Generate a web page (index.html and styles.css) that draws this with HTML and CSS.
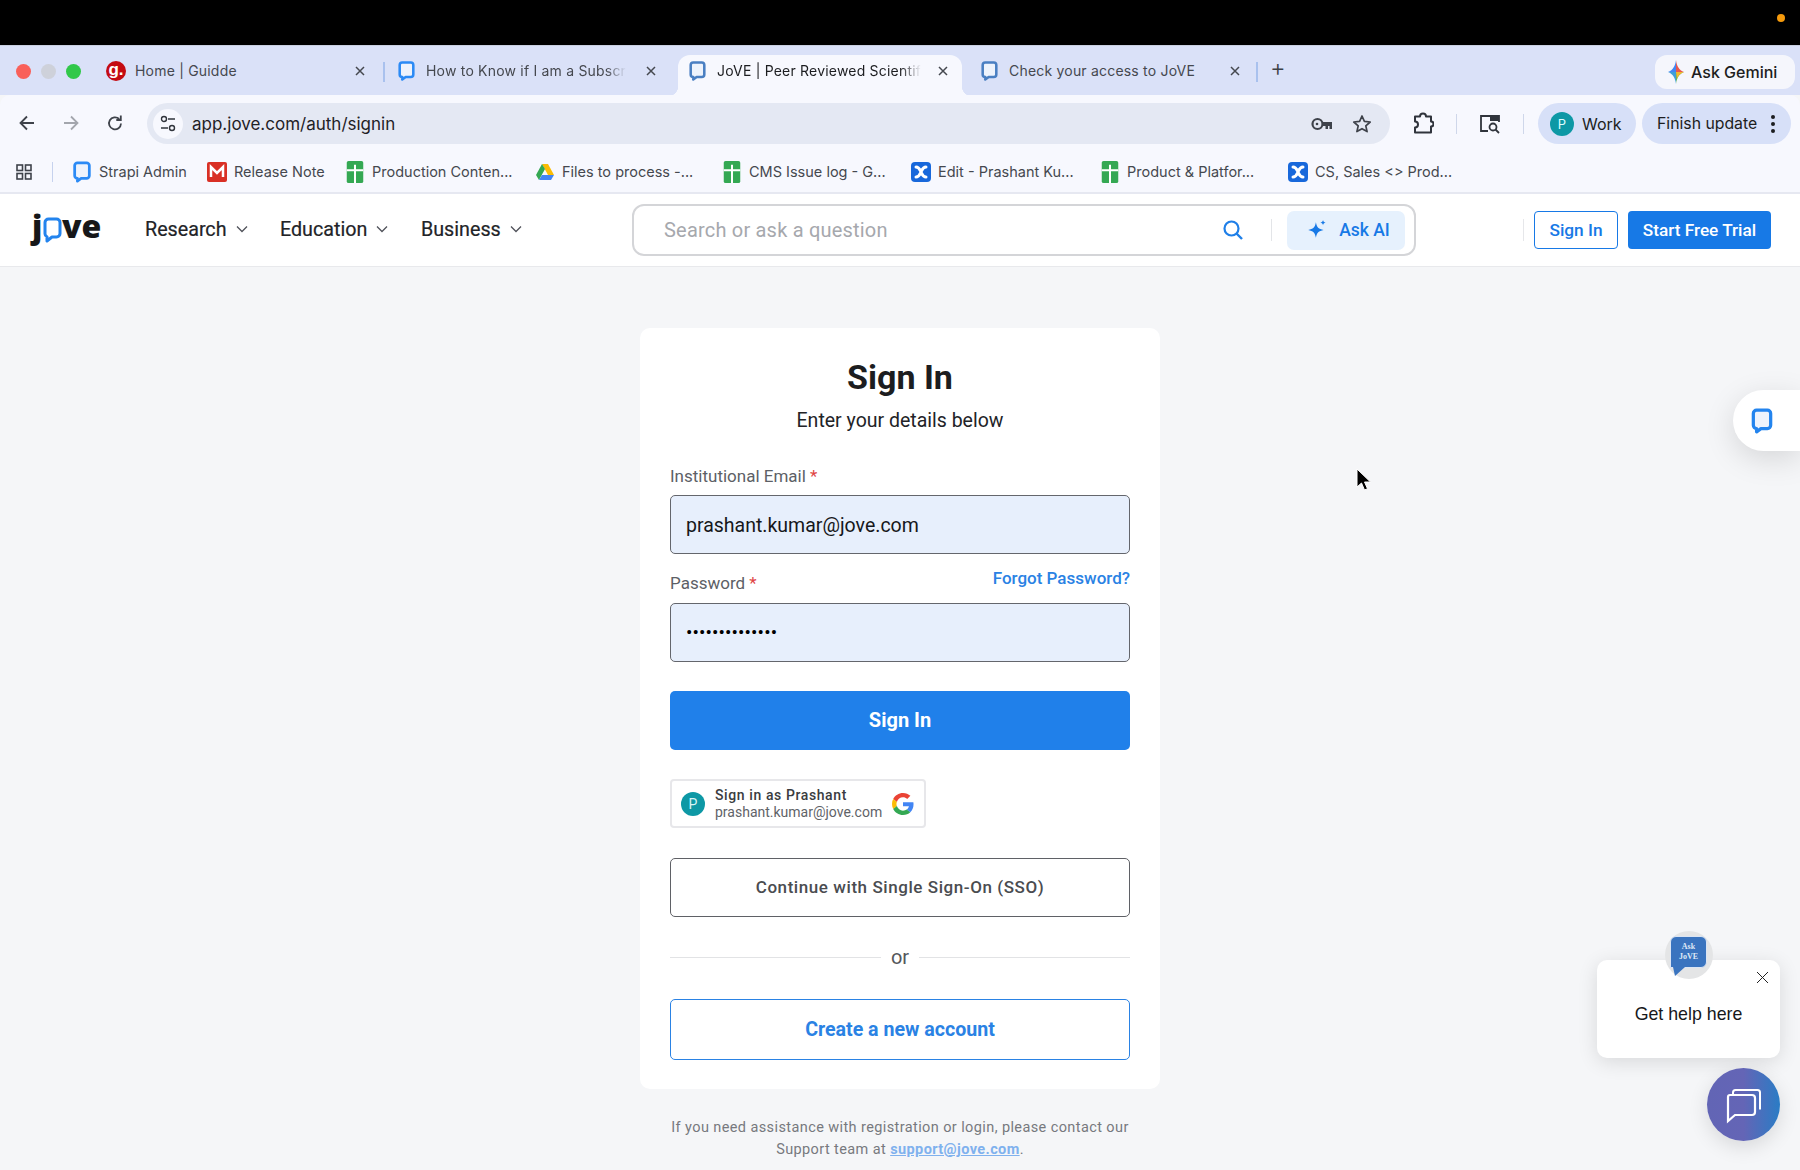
FILE: index.html
```html
<!DOCTYPE html>
<html lang="en">
<head>
<meta charset="utf-8">
<title>JoVE | Sign In</title>
<link rel="stylesheet" href="styles.css">
</head>
<body>
<svg class="defs" width="0" height="0" aria-hidden="true">
  <defs>
    <symbol id="bubble" viewBox="0 0 20 24"><path d="M5 2h10a3 3 0 0 1 3 3v11a3 3 0 0 1-3 3H9l-4 3v-3a3 3 0 0 1-3-3V5a3 3 0 0 1 3-3z" fill="#eef3fc" stroke="currentColor" stroke-width="3" stroke-linejoin="round"/></symbol>
    <symbol id="sheet" viewBox="0 0 20 24"><rect x="1" y="0" width="18" height="24" rx="2" fill="#34a853"/><path d="M1 10h18M10 4v20" stroke="#fff" stroke-width="2.2"/></symbol>
    <symbol id="conf" viewBox="0 0 20 20"><rect width="20" height="20" rx="4" fill="#1868db"/><path d="M5 5c3 0 4 3 5 5s2 5 5 5M15 5c-3 0-4 3-5 5s-2 5-5 5" stroke="#fff" stroke-width="3" fill="none" stroke-linecap="round"/></symbol>
    <symbol id="x" viewBox="0 0 12 12"><path d="M2 2l8 8M10 2l-8 8" stroke="currentColor" stroke-width="1.5" fill="none"/></symbol>
    <symbol id="chev" viewBox="0 0 12 8"><path d="M1 1.5l5 5 5-5" stroke="currentColor" stroke-width="1.3" fill="none"/></symbol>
  </defs>
</svg>

<div class="os-bar"><span class="os-dot"></span></div>

<div class="tab-strip">
  <div class="lights"><span class="light red"></span><span class="light grey"></span><span class="light green"></span></div>
  <div class="tab tab-a">
    <span class="guidde">g.</span>
    <span class="tab-title">Home | Guidde</span>
    <svg class="tab-x"><use href="#x"/></svg>
  </div>
  <span class="tab-sep"></span>
  <div class="tab tab-b">
    <svg class="fav fav-blue"><use href="#bubble"/></svg>
    <span class="tab-title fade">How to Know if I am a Subscr</span>
    <svg class="tab-x"><use href="#x"/></svg>
  </div>
  <div class="tab tab-c">
    <svg class="fav fav-steel"><use href="#bubble"/></svg>
    <span class="tab-title fade dark">JoVE | Peer Reviewed Scientif</span>
    <svg class="tab-x dark"><use href="#x"/></svg>
  </div>
  <div class="tab tab-d">
    <svg class="fav fav-steel"><use href="#bubble"/></svg>
    <span class="tab-title">Check your access to JoVE</span>
    <svg class="tab-x"><use href="#x"/></svg>
  </div>
  <span class="tab-sep"></span>
  <span class="plus">+</span>
  <div class="gemini">
    <svg width="18" height="26" viewBox="0 0 18 26"><path d="M9 1c.8 6 3 10 8 12H9z" fill="#e8574d"/><path d="M9 1c-.8 6-3 10-8 12h8z" fill="#4285f4"/><path d="M9 25c-.8-6-3-10-8-12h8z" fill="#3f9fd8"/><path d="M9 25c.8-6 3-10 8-12H9z" fill="#5fb35a"/><path d="M17 13c-4 1.500-6 4-7 7l-1-7z" fill="#f3b62e"/></svg>
    <span>Ask Gemini</span>
  </div>
</div>

<div class="toolbar">
  <svg class="tool back" width="20" height="20" viewBox="0 0 20 20"><path d="M17 10H4M10 3.500L3.500 10l6.500 6.500" stroke="currentColor" stroke-width="1.800" fill="none"/></svg>
  <svg class="tool fwd" width="20" height="20" viewBox="0 0 20 20"><path d="M3 10h13M10 3.500l6.500 6.500-6.500 6.500" stroke="currentColor" stroke-width="1.800" fill="none"/></svg>
  <svg class="tool reload" width="20" height="20" viewBox="0 0 20 20"><path d="M16 10.500a6 6 0 1 1-1.800-4.500" stroke="currentColor" stroke-width="1.800" fill="none"/><path d="M15.800 2.500v4.500h-4.500" stroke="currentColor" stroke-width="1.800" fill="none"/></svg>
  <div class="address">
    <span class="site-ico"><svg width="16" height="20" viewBox="0 0 16 20"><circle cx="4" cy="5" r="2.500" stroke="#30343c" stroke-width="1.400" fill="none"/><path d="M8 5h7M1 14h7" stroke="#30343c" stroke-width="1.400"/><circle cx="12" cy="14" r="2.500" stroke="#30343c" stroke-width="1.400" fill="none"/></svg></span>
    <span class="url">app.jove.com/auth/signin</span>
    <svg class="key" width="22" height="16" viewBox="0 0 22 16"><circle cx="6.500" cy="8" r="5" stroke="#3e424a" stroke-width="2.200" fill="none"/><circle cx="6" cy="8" r="1.300" fill="#3e424a"/><path d="M11 6h10v7h-2.500v-3h-1.500v3h-2.500v-3H11z" fill="#3e424a"/></svg>
    <svg class="star" width="20" height="20" viewBox="0 0 20 20"><path d="M10 2l2.400 5.400 5.800.6-4.400 3.900 1.300 5.700L10 14.700l-5.100 2.900 1.300-5.700L1.800 8l5.800-.6z" stroke="#3e424a" stroke-width="1.700" fill="none" stroke-linejoin="round"/></svg>
  </div>
  <svg class="ext" width="22" height="22" viewBox="0 0 22 22"><path d="M3 4h5a3 3 0 0 1 6 0h5v5a2.500 2.500 0 0 1 0 5v6H3v-5a3 3 0 0 0 0-6z" transform="translate(0 .500)" stroke="#30343c" stroke-width="2" fill="none" stroke-linejoin="round"/></svg>
  <span class="tool-sep s1"></span>
  <svg class="tsearch" width="22" height="22" viewBox="0 0 22 22"><path d="M9 18H2V3h18v6" stroke="#30343c" stroke-width="1.800" fill="none"/><path d="M11 3h9v5h-9z" fill="#30343c"/><circle cx="14" cy="14" r="3.500" stroke="#30343c" stroke-width="1.800" fill="none"/><path d="M16.500 16.500L20 20" stroke="#30343c" stroke-width="1.800"/></svg>
  <span class="tool-sep s2"></span>
  <div class="work"><span class="avatar">P</span><span>Work</span></div>
  <div class="finish"><span>Finish update</span><span class="kebab"><i></i><i></i><i></i></span></div>
</div>

<div class="bookmarks">
  <svg class="apps" width="16" height="16" viewBox="0 0 16 16"><g fill="none" stroke="#3e424a" stroke-width="1.600"><rect x="1" y="1" width="5.500" height="5.500"/><rect x="9.500" y="1" width="5.500" height="5.500"/><rect x="1" y="9.500" width="5.500" height="5.500"/><rect x="9.500" y="9.500" width="5.500" height="5.500"/></g></svg>
  <span class="bm-sep"></span>
  <div class="bm-grid">
    <div class="bm"><svg class="bm-ico fav-blue"><use href="#bubble"/></svg><span>Strapi Admin</span></div>
    <div class="bm"><svg class="bm-ico" viewBox="0 0 20 20"><rect width="20" height="20" rx="2" fill="#d93025"/><path d="M4 15V5l6 6 6-6v10" stroke="#fff" stroke-width="2.500" fill="none"/></svg><span>Release Note</span></div>
    <div class="bm"><svg class="bm-ico"><use href="#sheet"/></svg><span>Production Conten...</span></div>
    <div class="bm"><svg class="bm-ico" viewBox="0 0 20 20"><path d="M7 2h6l6 11h-6z" fill="#fbbc04"/><path d="M7 2L1 13l3 5 6-11z" fill="#34a853"/><path d="M4 18h12l3-5H7z" fill="#4285f4"/></svg><span>Files to process -...</span></div>
    <div class="bm"><svg class="bm-ico"><use href="#sheet"/></svg><span>CMS Issue log - G...</span></div>
    <div class="bm"><svg class="bm-ico"><use href="#conf"/></svg><span>Edit - Prashant Ku...</span></div>
    <div class="bm"><svg class="bm-ico"><use href="#sheet"/></svg><span>Product &amp; Platfor...</span></div>
    <div class="bm"><svg class="bm-ico"><use href="#conf"/></svg><span>CS, Sales &lt;&gt; Prod...</span></div>
  </div>
</div>

<header class="site-header">
  <a class="logo"><span class="logo-j">j</span><svg class="logo-o" width="19" height="26" viewBox="0 0 19 26"><path d="M5.500 2h8A3.500 3.500 0 0 1 17 5.500v11a3.500 3.500 0 0 1-3.500 3.500H9l-5 4v-4.200A3.500 3.500 0 0 1 2 16.500v-11A3.500 3.500 0 0 1 5.500 2z" fill="none" stroke="#2384ee" stroke-width="3" stroke-linejoin="round"/></svg><span class="logo-ve">ve</span></a>
  <nav class="nav">
    <a class="nav-item n1">Research<svg class="chev"><use href="#chev"/></svg></a>
    <a class="nav-item n2">Education<svg class="chev"><use href="#chev"/></svg></a>
    <a class="nav-item n3">Business<svg class="chev"><use href="#chev"/></svg></a>
  </nav>
  <div class="search">
    <span class="placeholder">Search or ask a question</span>
    <svg class="mag" width="22" height="22" viewBox="0 0 22 22"><circle cx="9.500" cy="9.500" r="7" stroke="#1f7fe8" stroke-width="2.200" fill="none"/><path d="M14.500 14.500L20 20" stroke="#1f7fe8" stroke-width="2.400"/></svg>
    <span class="search-sep"></span>
    <button class="ask-ai"><svg width="22" height="22" viewBox="0 0 20 20"><path d="M9 3c.8 4.500 2.500 6.300 7 7-4.500.8-6.200 2.500-7 7-.8-4.500-2.500-6.200-7-7 4.500-.7 6.200-2.500 7-7z" fill="#1779e6"/><path d="M15.500 1c.2 1.500.8 2.100 2.300 2.300-1.500.3-2.100.9-2.300 2.400-.3-1.500-.9-2.100-2.400-2.400 1.500-.2 2.100-.8 2.400-2.300z" fill="#1779e6"/></svg>Ask AI</button>
  </div>
  <span class="head-sep"></span>
  <button class="head-signin">Sign In</button>
  <button class="head-trial">Start Free Trial</button>
</header>

<main class="page">
  <section class="card">
    <h1 class="card-title">Sign In</h1>
    <p class="card-sub">Enter your details below</p>
    <label class="field-label email-label">Institutional Email <em>*</em></label>
    <div class="input">prashant.kumar@jove.com</div>
    <div class="pass-row">
      <label class="field-label">Password <em>*</em></label>
      <a class="forgot">Forgot Password?</a>
    </div>
    <div class="input dots">••••••••••••••</div>
    <button class="primary">Sign In</button>
    <div class="google">
      <span class="g-avatar">P</span>
      <span class="g-text"><b>Sign in as Prashant</b><span>prashant.kumar@jove.com</span></span>
      <svg width="22" height="22" viewBox="0 0 48 48"><path fill="#EA4335" d="M24 9.500c3.500 0 6.700 1.200 9.200 3.600l6.900-6.900C35.900 2.400 30.500 0 24 0 14.600 0 6.500 5.400 2.600 13.200l8 6.200C12.500 13.700 17.800 9.500 24 9.500z"/><path fill="#4285F4" d="M47 24.500c0-1.600-.2-3.100-.4-4.500H24v9h12.900c-.6 3-2.300 5.500-4.800 7.200l7.700 6C44.300 38 47 31.800 47 24.500z"/><path fill="#FBBC05" d="M10.500 28.600c-.5-1.400-.8-3-.8-4.600s.3-3.200.8-4.600l-8-6.200C.9 16.500 0 20.100 0 24s.9 7.500 2.600 10.800l7.900-6.200z"/><path fill="#34A853" d="M24 48c6.500 0 11.900-2.100 15.900-5.800l-7.700-6c-2.200 1.400-4.900 2.300-8.200 2.300-6.200 0-11.500-4.200-13.400-9.900l-8 6.200C6.500 42.600 14.600 48 24 48z"/></svg>
    </div>
    <button class="sso">Continue with Single Sign-On (SSO)</button>
    <div class="or"><span>or</span></div>
    <button class="create">Create a new account</button>
  </section>
  <p class="assist">If you need assistance with registration or login, please contact our<br>Support team at <a>support@jove.com</a>.</p>
</main>

<div class="side-tab"><svg width="22" height="26" class="fav-side"><use href="#bubble"/></svg></div>

<svg class="cursor" width="16" height="24" viewBox="0 0 16 24"><path d="M2 1v18l4.500-4 3 7 3-1.300-3-6.700h6z" fill="#000" stroke="#fff" stroke-width="1"/></svg>

<aside class="help-pop">
  <span class="help-badge"><span class="help-bubble">Ask<br>JoVE</span></span>
  <svg class="help-x" width="13" height="13" viewBox="0 0 13 13"><path d="M1 1l11 11M12 1L1 12" stroke="#222" stroke-width="1"/></svg>
  <span>Get help here</span>
</aside>
<div class="fab"><svg width="38" height="38" viewBox="0 0 38 38"><path d="M9 8V6.500A2.500 2.500 0 0 1 11.500 4h22A2.500 2.500 0 0 1 36 6.500v17" stroke="#fff" stroke-width="2" fill="none" transform="translate(-1 0)"/><path d="M5 9h22a3 3 0 0 1 3 3v14a3 3 0 0 1-3 3H10l-7 6V11a2 2 0 0 1 2-2z" stroke="#fff" stroke-width="2.200" fill="none"/></svg></div>
</body>
</html>
```
FILE: styles.css
```css
* { box-sizing: border-box; }
html, body { margin: 0; height: 1170px; overflow: hidden; }
body { position: relative; width: 1800px; background: #f5f6f8; font-family: Roboto, "Liberation Sans", sans-serif; color: #1c1d20; }
button { font-family: inherit; cursor: pointer; }
.defs { position: absolute; }

.os-bar { height: 45px; background: #000; display: flex; justify-content: flex-end; align-items: center; padding: 0 15px 0 0; }
.os-dot { width: 8px; height: 8px; border-radius: 50%; background: #f59a0c; margin-bottom: 9px; }

.tab-strip { height: 50px; background: #dae1f8; display: flex; padding-top: 9px; font-family: Inter, "Liberation Sans", sans-serif; border-top: 1px solid #c9cfe0; }
.lights { width: 93px; display: flex; gap: 10px; padding: 9px 0 0 16px; }
.light { width: 15px; height: 15px; border-radius: 50%; }
.red { background: #f9605a; } .grey { background: #ced1da; } .green { background: #31c84a; }
.tab { height: 41px; display: flex; align-items: flex-start; padding-top: 5px; position: relative; font-size: 14px; color: #45484f; }
.tab-a { width: 290px; padding-left: 13px; gap: 9px; }
.tab-b { width: 293px; padding-left: 13px; gap: 11px; }
.tab-c { width: 284px; padding-left: 11px; gap: 11px; background: #f7f8fe; border-radius: 12px 12px 0 0; color: #1c1d20; }
.tab-c::before, .tab-c::after { content: ""; position: absolute; bottom: 0; width: 10px; height: 10px; }
.tab-c::before { left: -10px; background: radial-gradient(circle at 0 0, #dae1f8 10px, #f7f8fe 10.500px); }
.tab-c::after { right: -10px; background: radial-gradient(circle at 100% 0, #dae1f8 10px, #f7f8fe 10.500px); }
.tab-d { width: 291px; padding-left: 16px; gap: 11px; margin-left: 3px; }
.tab-sep { width: 2px; height: 20px; background: #a9c1ee; margin-top: 7px; flex: none; }
.tab-title { white-space: nowrap; line-height: 20px; letter-spacing: .2px; margin-top: 1px; }
.fade { -webkit-mask-image: linear-gradient(90deg, #000 90%, transparent 100%); mask-image: linear-gradient(90deg, #000 90%, transparent 100%); }
.dark { color: #1c1d20; }
.fav { width: 17px; height: 22px; flex: none; }
.fav-blue { color: #2b8af5; }
.fav-steel { color: #4a7fc2; }
.guidde { width: 20px; height: 20px; border-radius: 50%; background: #c40b12; color: #fff; font: 700 17px/17px "Liberation Sans", sans-serif; text-align: center; flex: none; margin-top: 1px; }
.tab-x { width: 12px; height: 12px; position: absolute; right: 17px; top: 10px; color: #45484f; }
.tab-b .tab-x { right: 21px; }
.tab-c .tab-x { right: 13px; }
.tab-d .tab-x { right: 15px; }
.plus { font-size: 24px; line-height: 26px; color: #3c4046; margin-left: 12px; width: 20px; font-weight: 300; }
.gemini { margin-left: auto; margin-right: 5px; width: 140px; height: 34px; border-radius: 12px; background: #f5f6fc; display: flex; align-items: center; gap: 6px; padding-left: 12px; font-size: 16px; font-weight: 500; color: #1c1d20; line-height: 32px; }

.toolbar { height: 50px; background: #f7f8fe; position: relative; display: flex; align-items: flex-start; padding-top: 8px; font-family: Inter, "Liberation Sans", sans-serif; border-radius: 10px 10px 0 0; }
.tool { flex: none; margin-top: 10px; color: #3e424a; }
.back { margin-left: 17px; }
.fwd { margin-left: 24px; color: #a3a6ad; }
.reload { margin-left: 24px; }
.address { width: 1243px; height: 41px; margin-left: 22px; background: #e4e8f3; border-radius: 21px; display: flex; align-items: center; padding-left: 6px; flex: none; }
.site-ico { width: 30px; height: 30px; border-radius: 50%; background: #f7f8fe; display: flex; align-items: center; justify-content: center; }
.url { font-size: 17px; margin-left: 9px; color: #1f2126; }
.key { margin-left: auto; }
.star { margin-left: 19px; margin-right: 18px; }
.ext { margin: 9px 0 0 22px; flex: none; }
.tool-sep { width: 1px; height: 20px; background: #cfd7ea; margin-top: 11px; flex: none; }
.s1 { margin-left: 22px; }
.tsearch { margin: 10px 0 0 22px; flex: none; }
.s2 { margin-left: 22px; }
.work { width: 98px; height: 41px; margin-left: 14px; border-radius: 21px; background: #d7e0f8; display: flex; align-items: center; gap: 8px; padding-left: 12px; font-size: 16px; color: #1c1d20; font-weight: 400; flex: none; }
.avatar { width: 24px; height: 24px; border-radius: 50%; background: #0d98a5; color: #dff; font-size: 13px; line-height: 24px; text-align: center; font-weight: 400; }
.finish { width: 149px; height: 41px; margin-left: 6px; border-radius: 21px; background: #d7e0f8; display: flex; align-items: center; padding-left: 15px; font-size: 15.800px; font-weight: 400; color: #1c1d20; flex: none; }
.kebab { display: flex; flex-direction: column; gap: 3px; margin-left: 14px; }
.kebab i { width: 4px; height: 4px; border-radius: 50%; background: #1c1d20; display: block; }

.bookmarks { height: 49px; background: #f7f8fe; border-bottom: 2px solid #e6e8f1; display: flex; align-items: center; padding: 6px 0 0 16px; font-family: Inter, "Liberation Sans", sans-serif; font-size: 14.500px; color: #45484f; }
.apps { flex: none; }
.bm-sep { width: 1px; height: 20px; background: #c6d2ee; margin-left: 20px; }
.bm-grid { display: grid; grid-template-columns: 135px 138px 190px 187px 189px 189px 188px auto; margin-left: 19px; }
.bm { display: flex; align-items: center; gap: 7px; white-space: nowrap; }
.bm-ico { width: 20px; height: 22px; flex: none; }

.site-header { height: 73px; background: #fff; border-bottom: 1px solid #e8e9ec; display: flex; align-items: center; position: relative; }
.logo { display: flex; align-items: flex-start; margin: 4px 0 0 30px; width: 115px; font: 800 32px/32px "Open Sans", sans-serif; color: #161719; height: 44px; }
.logo-j { width: 11px; margin-left: 2px; }
.logo-o { margin-top: 7px; flex: none; }
.nav { display: flex; font-size: 19.700px; font-weight: 400; color: #222327; margin-top: -2px; -webkit-text-stroke: .2px #222327; }
.nav-item { display: flex; align-items: center; }
.n1 { width: 135px; } .n2 { width: 141px; } .n3 { width: 212px; }
.chev { width: 12px; height: 8px; margin-left: 9px; color: #50525a; }
.search { position: absolute; left: 632px; top: 10px; width: 784px; height: 52px; border: 2px solid #d4d5d8; border-radius: 12px; display: flex; align-items: center; padding: 0 9px 0 30px; }
.placeholder { font-size: 20px; color: #a6a8ad; letter-spacing: .2px; }
.mag { margin-left: auto; position: relative; left: 1px; }
.search-sep { width: 1px; height: 22px; background: #e3e5e8; margin: 0 15px 0 28px; }
.ask-ai { width: 118px; height: 39px; border: 0; border-radius: 7px; background: #e6f1fd; color: #1779e6; font-size: 17.500px; font-weight: 500; display: flex; align-items: center; justify-content: center; gap: 11px; padding: 0 0 0 4px; }
.head-sep { position: absolute; left: 1523px; top: 25px; width: 1px; height: 22px; background: #e6e7ea; }
.head-signin { position: absolute; left: 1534px; top: 17px; width: 84px; height: 38px; background: #fff; border: 1px solid #1779e6; border-radius: 4px; color: #1779e6; font-size: 17.300px; font-weight: 500; }
.head-trial { position: absolute; left: 1628px; top: 17px; width: 143px; height: 38px; background: #1779e6; border: 0; border-radius: 4px; color: #fff; font-size: 17.200px; font-weight: 500; }

.page { display: flex; flex-direction: column; align-items: center; padding-top: 61px; }
.card { width: 520px; height: 761px; background: #fff; border-radius: 10px; padding: 0 30px; display: flex; flex-direction: column; }
.card-title { margin: 27px 0 0; font-size: 34px; line-height: 44px; font-weight: 700; text-align: center; color: #1c1d20; }
.card-sub { margin: 10px 0 0; font-size: 19.500px; line-height: 24px; text-align: center; color: #222327; }
.field-label { font-size: 17px; line-height: 24px; color: #5d5f66; }
.field-label em { font-style: normal; color: #e04444; }
.email-label { margin-top: 31px; }
.input { height: 59px; margin-top: 7px; background: #e7effc; border: 1.500px solid #64666c; border-radius: 5px; padding-left: 15px; font-size: 19.500px; line-height: 59px; color: #16171a; }
.pass-row { display: flex; justify-content: space-between; margin-top: 15px; height: 27px; }
.pass-row .field-label { margin-top: 2px; }
.forgot { font-size: 17px; font-weight: 500; color: #2a82e4; line-height: 24px; margin-top: -3px; }
.dots { font-size: 19px; letter-spacing: .1px; color: #000; margin-top: 7px; line-height: 57px; }
.primary { height: 59px; margin-top: 29px; background: #2080ea; border: 0; border-radius: 5px; color: #fff; font-size: 20px; font-weight: 700; flex: none; padding-bottom: 3px; }
.google { width: 256px; height: 49px; margin-top: 29px; border: 2px solid #e7e7ea; border-radius: 4px; display: flex; align-items: center; padding: 0 9px; flex: none; }
.g-avatar { width: 24px; height: 24px; border-radius: 50%; background: #0d98a5; color: #d8f4f5; font-size: 14px; line-height: 24px; text-align: center; flex: none; }
.g-text { display: flex; flex-direction: column; margin-left: 10px; font-size: 14px; line-height: 16.500px; color: #5f6368; width: 177px; white-space: nowrap; }
.g-text b { font-weight: 500; color: #3a3c40; letter-spacing: .6px; }
.sso { height: 59px; margin-top: 30px; background: #fff; border: 1.500px solid #5f6166; border-radius: 5px; color: #4a4c50; font-size: 17px; font-weight: 500; letter-spacing: .57px; flex: none; padding-bottom: 3px; }
.or { margin-top: 22px; height: 36px; display: flex; align-items: center; gap: 9px; font-size: 20px; color: #55575c; }
.or::before, .or::after { content: ""; flex: 1; height: 1px; background: #e2e3e5; }
.or span { padding: 0 1px; }
.create { height: 61px; margin-top: 24px; background: #fff; border: 1.500px solid #2a82e4; border-radius: 5px; color: #2a82e4; font-size: 19.600px; font-weight: 700; flex: none; }
.assist { width: 520px; margin: 28px 0 0; text-align: center; font-size: 14.500px; line-height: 21.500px; color: #77797e; letter-spacing: .4px; }
.assist a { color: #7fb1ee; text-decoration: underline; font-weight: 700; }

.side-tab { position: absolute; left: 1733px; top: 390px; width: 67px; height: 61px; background: #fff; border-radius: 31px 0 0 31px; box-shadow: 0 8px 30px rgba(0,0,0,.13); padding: 18px 0 0 18px; }
.fav-side { color: #2384ee; display: block; }
.cursor { position: absolute; left: 1355px; top: 468px; }

.help-pop { position: absolute; left: 1597px; top: 960px; width: 183px; height: 98px; background: #fff; border-radius: 10px; box-shadow: 0 4px 20px rgba(0,0,0,.12); font: 17.800px "Liberation Sans", sans-serif; color: #17181a; text-align: center; padding-top: 44px; }
.help-badge { position: absolute; left: 68px; top: -29px; width: 48px; height: 48px; border-radius: 50%; background: #e4e5e6; }
.help-bubble { position: absolute; left: 5px; top: 5px; width: 37px; height: 32px; border-radius: 6px 6px 6px 0; background: #3a74bf; border: 1px solid #dbe5f4; color: #dfe9f7; font: 700 8px/10px "Liberation Serif", serif; padding-top: 5px; }
.help-bubble::after { content: ""; position: absolute; left: 2px; bottom: -9px; border-left: 2px solid transparent; border-right: 10px solid transparent; border-top: 9px solid #3a74bf; }
.help-x { position: absolute; right: 11px; top: 11px; }
.fab { position: absolute; left: 1707px; top: 1068px; width: 73px; height: 73px; border-radius: 50%; background: linear-gradient(90deg, #6265b5 0%, #6465b6 50%, #2a7cc5 100%); box-shadow: 0 6px 20px rgba(0,0,0,.12); display: flex; align-items: center; justify-content: center; }
```
